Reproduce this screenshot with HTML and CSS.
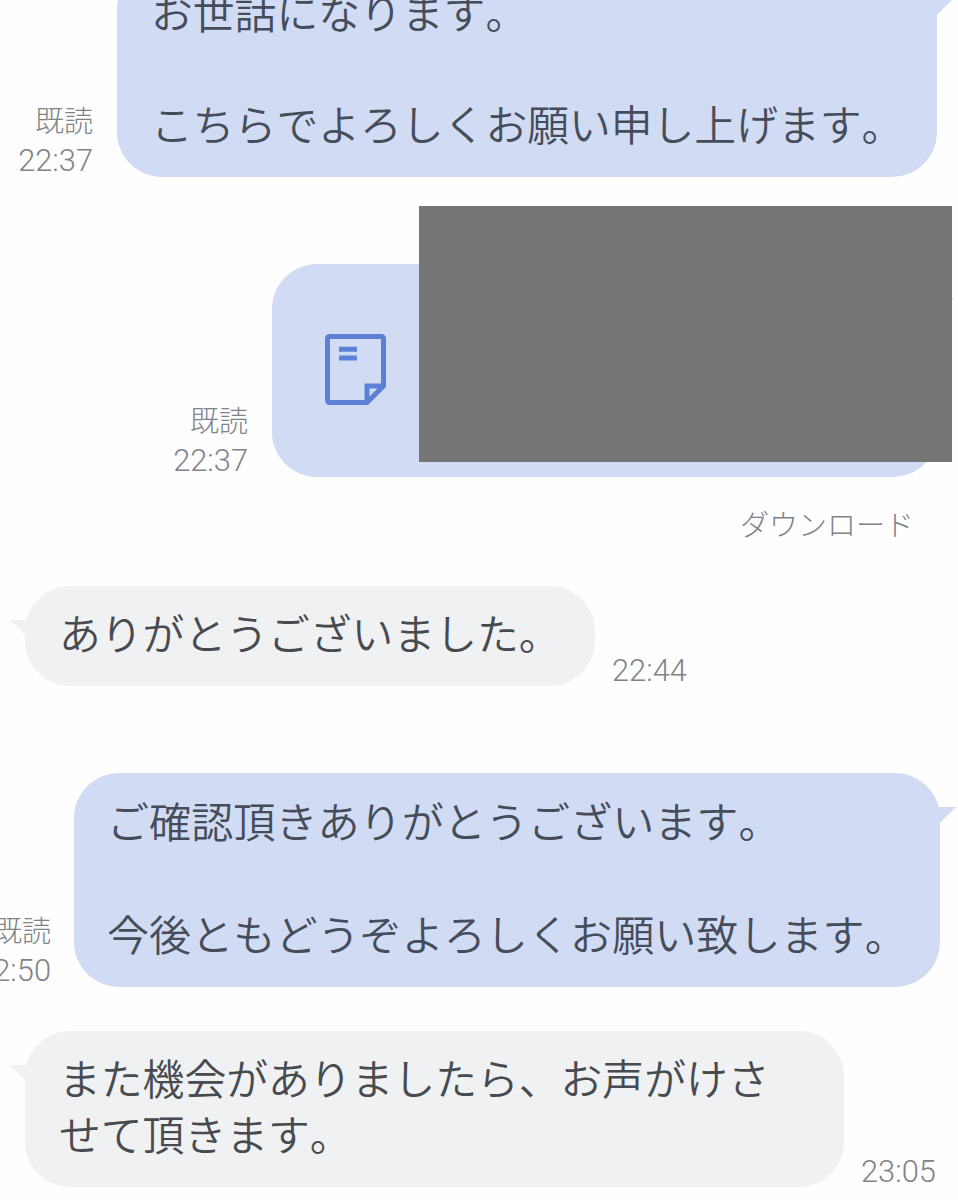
FILE: index.html
```html
<!DOCTYPE html>
<html lang="ja">
<head>
<meta charset="utf-8">
<title>トーク</title>
<link rel="stylesheet" href="styles.css">
</head>
<body>
<main class="chat">
  <section class="row sent first">
    <div class="meta"><span class="read">既読</span><span class="time">22:37</span></div>
    <div class="bubble blue"><p>お世話になります。</p><p class="blank"></p><p>こちらでよろしくお願い申し上げます。</p>
      <svg class="tail right" viewBox="0 0 18 17"><path d="M0 0H18L2 16H0Z"/></svg>
    </div>
  </section>

  <section class="row sent file">
    <div class="meta"><span class="read">既読</span><span class="time">22:37</span></div>
    <div class="bubble blue attachment">
      <svg class="doc" viewBox="0 0 61 71">
        <path d="M5 2.5H56Q58.5 2.5 58.5 5V52L42 68.500H5Q2.500 68.500 2.500 66V5Q2.500 2.500 5 2.500Z"/>
        <path d="M42 68V52H58"/>
        <path d="M14 15.300H32M14 24H32"/>
      </svg>
      <svg class="tail right" viewBox="0 0 18 17"><path d="M0 0H18L2 16H0Z"/></svg>
      <div class="mask"></div>
    </div>
  </section>
  <p class="download">ダウンロード</p>

  <section class="row received thanks">
    <div class="bubble gray"><p>ありがとうございました。</p>
      <svg class="tail left" viewBox="0 0 18 17"><path d="M18 0H0L16 14.500H18Z"/></svg>
    </div>
    <div class="meta"><span class="time">22:44</span></div>
  </section>

  <section class="row sent confirm">
    <div class="meta"><span class="read">既読</span><span class="time">22:50</span></div>
    <div class="bubble blue"><p>ご確認頂きありがとうございます。</p><p class="blank"></p><p>今後ともどうぞよろしくお願い致します。</p>
      <svg class="tail right" viewBox="0 0 18 17"><path d="M0 0H18L2 16H0Z"/></svg>
    </div>
  </section>

  <section class="row received closing">
    <div class="bubble gray"><p>また機会がありましたら、お声がけさ<br>せて頂きます。</p>
      <svg class="tail left" viewBox="0 0 18 17"><path d="M18 0H0L16 14.500H18Z"/></svg>
    </div>
    <div class="meta"><span class="time">23:05</span></div>
  </section>
</main>
</body>
</html>
```
FILE: styles.css
```css
* { box-sizing: border-box; }
html, body { margin: 0; height: 1200px; overflow: hidden; background: #fefefe; }
p { margin: 0; }
.chat {
  width: 958px;
  height: 1235px;
  margin-top: -35px;
  font-family: "Noto Sans CJK JP", sans-serif;
  font-weight: 350;
  font-kerning: none;
  text-spacing-trim: space-all;
}
.row { display: flex; align-items: flex-end; }
.sent { justify-content: flex-end; gap: 24px; padding-right: 21px; }
.received { justify-content: flex-start; gap: 17px; padding-left: 25px; }
.bubble {
  position: relative;
  flex: none;
  padding: 18px 34px 26px;
  border-radius: 45px;
  font-size: 41.8px;
  line-height: 56px;
  white-space: nowrap;
}
.bubble p { min-height: 56px; }
.blue { background: #d1dbf4; color: #454d5b; }
.gray { background: #f0f1f3; color: #474b50; }
.first .bubble { width: 820px; }
.tail { position: absolute; top: 34px; width: 18px; height: 17px; }
.tail.right { right: -16px; fill: #d1dbf4; }
.tail.left { left: -16px; fill: #f0f1f3; }

.meta {
  display: flex;
  flex-direction: column;
  align-items: flex-end;
  flex: none;
  color: #808389;
}
.read { font-size: 29px; font-weight: 300; line-height: 40px; padding-bottom: 6px; }
.time { font-family: Roboto, sans-serif; font-weight: 350; font-size: 30.8px; line-height: 32px; }
.received .time { line-height: 30px; }

.file { margin-top: 87px; padding-right: 20.5px; }
.attachment { width: 665.5px; height: 212.5px; padding: 70px 53px; }
.doc { display: block; width: 61px; height: 71px; fill: none; stroke: #5b80d5; stroke-width: 5; }
.mask {
  position: absolute;
  left: 147px;
  top: -58px;
  width: 532.500px;
  height: 255.500px;
  background: #767676;
}
.download {
  margin-top: 26.5px;
  padding-right: 44px;
  text-align: right;
  font-size: 29px;
  font-weight: 300;
  line-height: 40px;
  color: #808389;
}
.thanks { margin-top: 43px; }
.thanks .bubble { width: 570px; }
.confirm { margin-top: 87px; padding-right: 18px; gap: 23px; }
.confirm .bubble { width: 866px; padding: 18.5px 33px 25.500px; font-size: 42.1px; line-height: 56.5px; }
.confirm .bubble p { min-height: 56.5px; }
.closing { margin-top: 44.5px; }
.closing .bubble { width: 819px; }
```
